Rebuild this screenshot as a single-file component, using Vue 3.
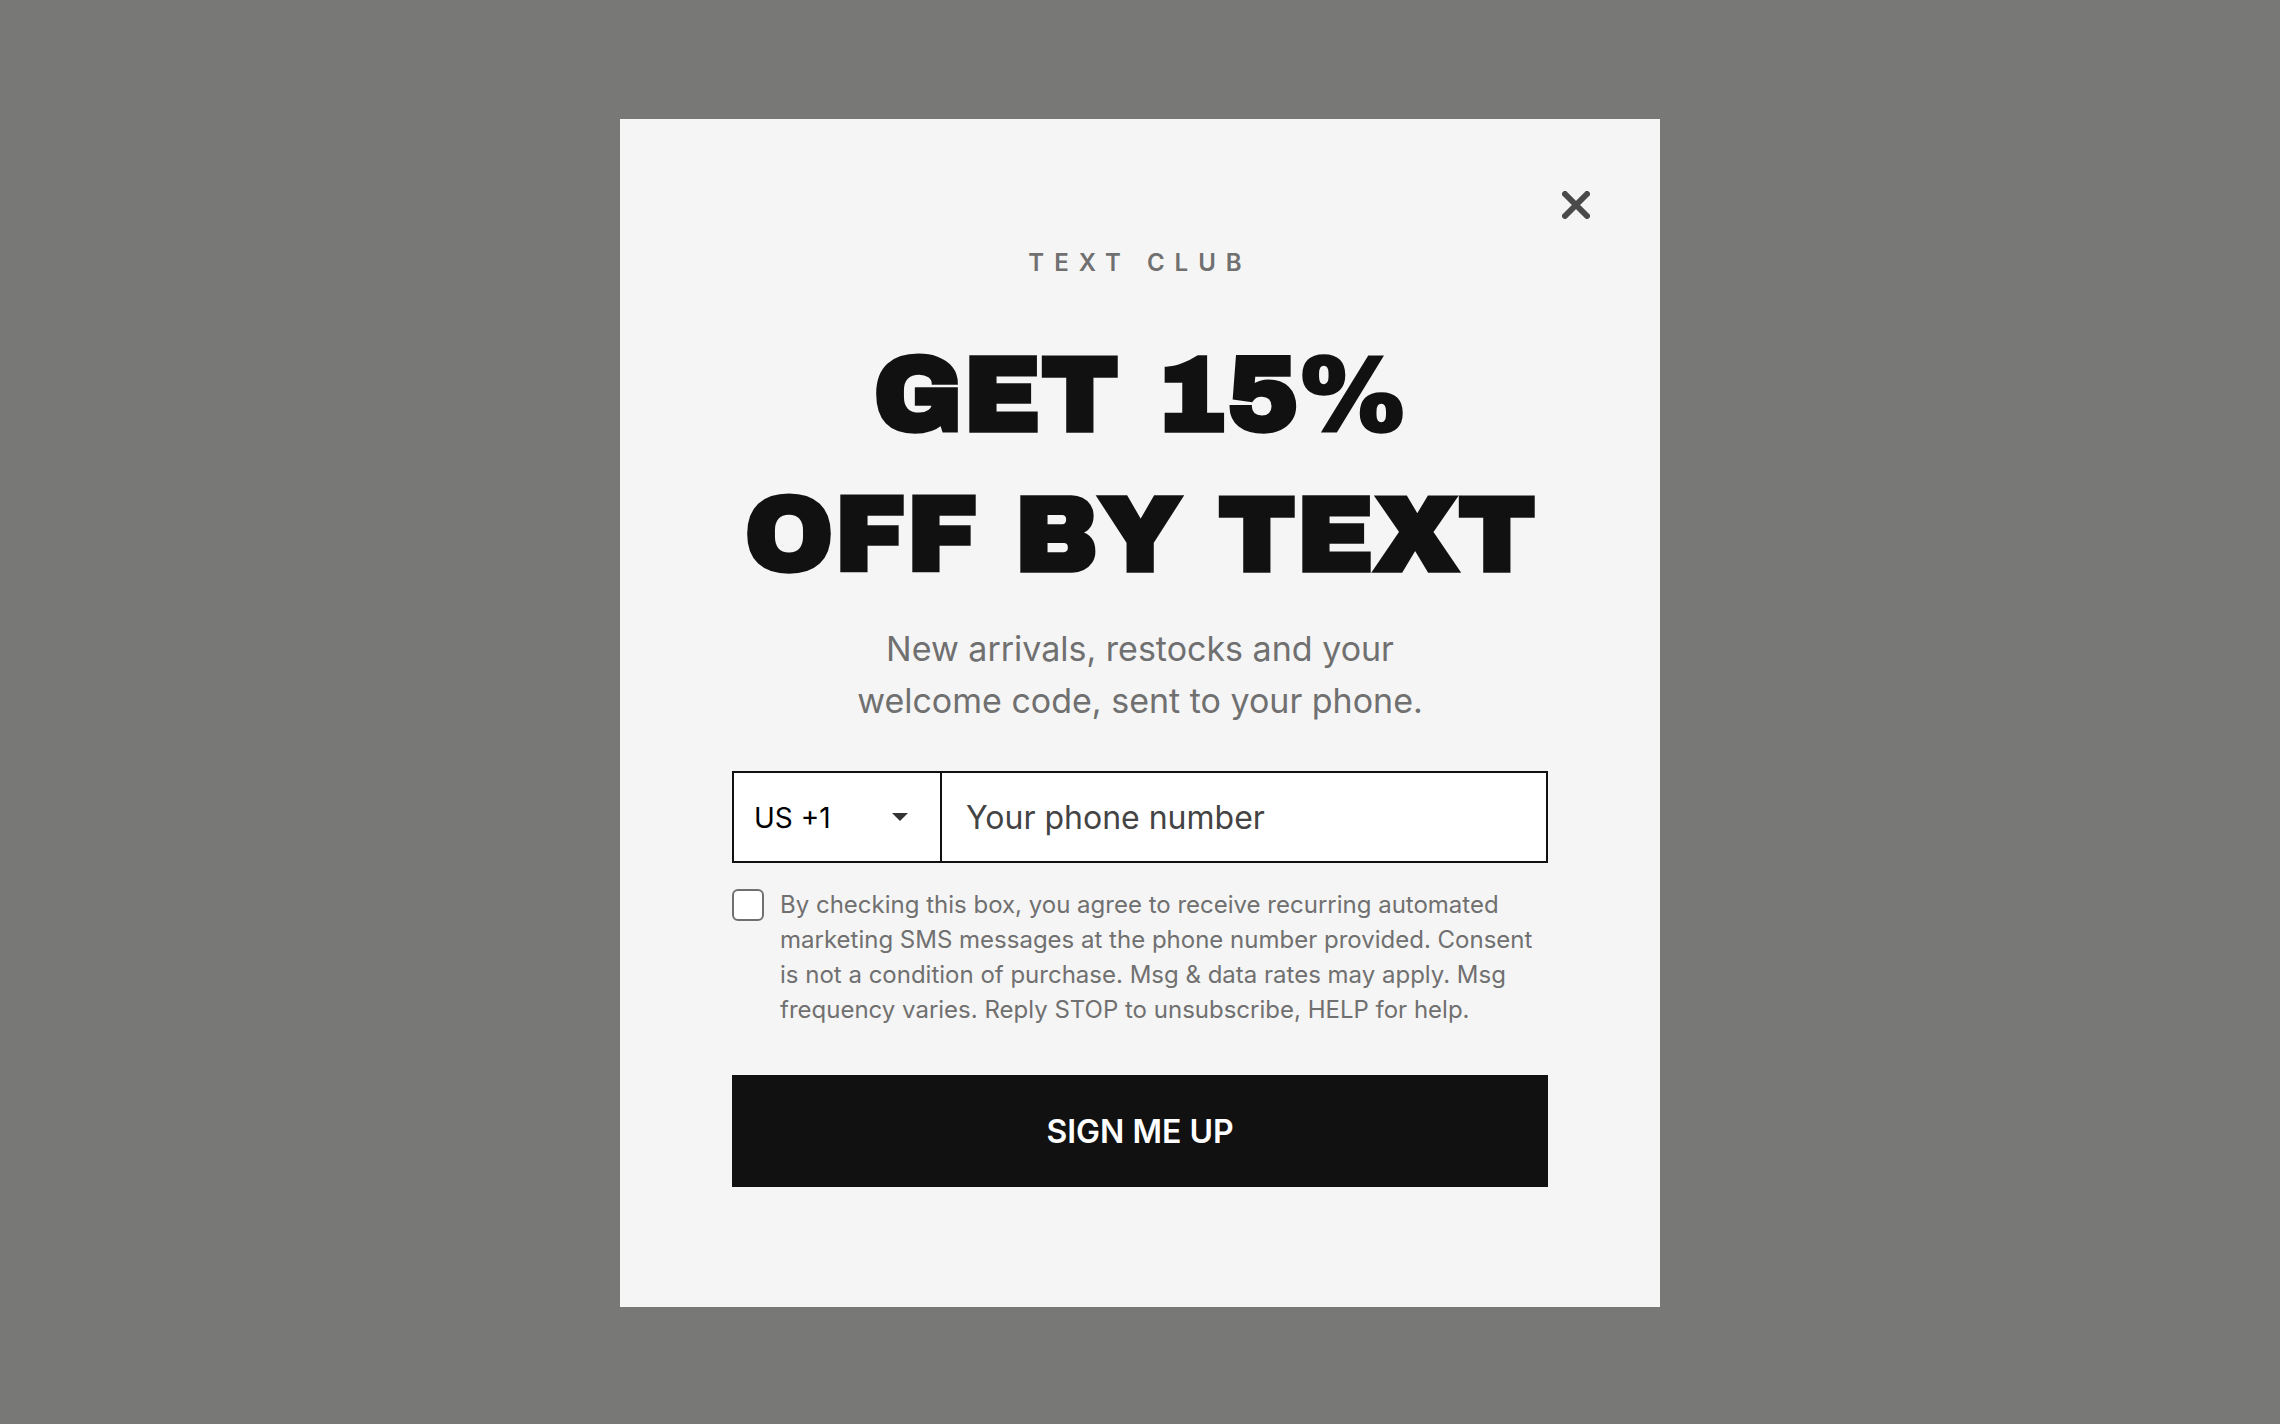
<script setup>
import { ref } from 'vue'

const open = ref(true)
const country = ref('US')
const phone = ref('')
const agreed = ref(false)
</script>

<template>
  <main class="overlay">
    <section v-if="open" class="card" role="dialog" aria-modal="true" aria-labelledby="signup-title">
      <button class="close" type="button" aria-label="Close" @click="open = false">
        <svg viewBox="0 0 28 28" width="28" height="28" aria-hidden="true">
          <path d="M3 3 25 25M25 3 3 25" fill="none" stroke="currentColor" stroke-width="6" stroke-linecap="round" />
        </svg>
      </button>

      <p class="eyebrow">TEXT CLUB</p>
      <h1 id="signup-title" class="title">GET 15%<br />OFF BY TEXT</h1>
      <p class="intro">New arrivals, restocks and your<br />welcome code, sent to your phone.</p>

      <form class="form" @submit.prevent>
        <div class="field">
          <div class="country">
            <select v-model="country" class="select" aria-label="Country code">
              <option value="US">US +1</option>
            </select>
            <svg class="caret" viewBox="0 0 16 8" width="16" height="8" aria-hidden="true">
              <path d="M0 0H16L8 8Z" fill="#333" />
            </svg>
          </div>
          <input v-model="phone" class="phone" type="tel" placeholder="Your phone number" aria-label="Your phone number" />
        </div>

        <div class="consent">
          <input id="consent" v-model="agreed" class="check" type="checkbox" />
          <label for="consent">By checking this box, you agree to receive recurring automated marketing SMS messages at the phone number provided. Consent is not a condition of purchase. Msg &amp; data rates may apply. Msg frequency varies. Reply STOP to unsubscribe, HELP for help.</label>
        </div>

        <button class="submit" type="submit">SIGN ME UP</button>
      </form>
    </section>
  </main>
</template>

<style>
body {
  margin: 0;
  background: #787876;
}
</style>

<style scoped>
.overlay {
  box-sizing: border-box;
  min-height: 100vh;
  display: flex;
  align-items: center;
  justify-content: center;
  padding: 2px 24px 0;
  background: #787876;
  font-family: Inter, "Liberation Sans", sans-serif;
  color: #707070;
}

.card {
  position: relative;
  box-sizing: border-box;
  width: 100%;
  max-width: 1040px;
  padding: 126px 112px 120px;
  background: #f5f5f5;
  text-align: center;
}

.close {
  position: absolute;
  top: 60px;
  right: 58px;
  display: grid;
  place-items: center;
  width: 52px;
  height: 52px;
  padding: 0;
  border: 0;
  background: none;
  color: #4a4a4a;
  cursor: pointer;
}

.eyebrow {
  margin: 0 0 44px;
  font-size: 24px;
  line-height: 36px;
  font-weight: 600;
  letter-spacing: 10px;
}

.title {
  margin: 0 0 18px;
  font-family: "Archivo Black", "DejaVu Sans", sans-serif;
  font-size: 108px;
  line-height: 140px;
  font-weight: 900;
  color: #111;
  white-space: nowrap;
}

.intro {
  margin: 0 0 44px;
  font-size: 34px;
  line-height: 52px;
}

.field {
  display: flex;
  box-sizing: border-box;
  height: 92px;
  margin-bottom: 24px;
  border: 2px solid #111;
  background: #fff;
}

.country {
  position: relative;
  flex: 0 0 208px;
  box-sizing: border-box;
  border-right: 2px solid #111;
}

.select {
  width: 100%;
  height: 100%;
  padding: 2px 48px 0 20px;
  border: 0;
  border-radius: 0;
  appearance: none;
  background: transparent;
  font: 400 28px/40px Inter, "Liberation Sans", sans-serif;
  color: #000;
}

.caret {
  position: absolute;
  top: 40px;
  right: 32px;
  pointer-events: none;
}

.phone {
  flex: 1;
  min-width: 0;
  padding: 2px 24px 0;
  border: 0;
  background: transparent;
  font: 400 32px/40px Inter, "Liberation Sans", sans-serif;
  color: #111;
}

.phone::placeholder {
  color: #444;
  opacity: 1;
}

.consent {
  display: flex;
  align-items: flex-start;
  gap: 16px;
  margin-bottom: 48px;
  font-size: 24px;
  line-height: 35px;
  text-align: left;
}

.check {
  flex: none;
  box-sizing: border-box;
  width: 32px;
  height: 32px;
  margin: 2px 0 0;
  border: 2px solid #707070;
  border-radius: 6px;
  appearance: none;
  background: #fff;
}

.check:checked {
  background: #111;
}

.submit {
  display: block;
  width: 100%;
  height: 112px;
  padding: 2px 24px 0;
  border: 0;
  background: #111;
  font: 600 32px/40px Inter, "Liberation Sans", sans-serif;
  color: #fff;
  cursor: pointer;
}
</style>
